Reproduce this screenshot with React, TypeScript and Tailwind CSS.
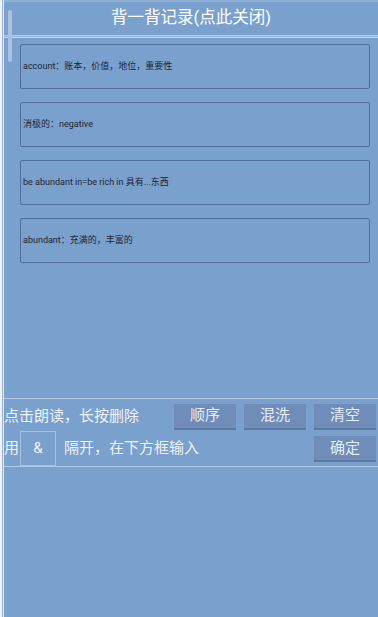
import React from "react";

const words = [
  "account：账本，价值，地位，重要性",
  "消极的：negative",
  "be abundant in=be rich in 具有...东西",
  "abundant：充满的，丰富的",
];

const font = { fontFamily: 'Roboto, "Noto Sans CJK SC", "Noto Sans", sans-serif' };

const Btn = ({ label }: { label: string }) => (
  <button className="w-[62px] h-[27px] bg-[#6f8db8] border-t border-t-[#82a0c8] border-b-2 border-b-[#5d79a0] text-[15px] text-[#e6ecf5] leading-none">
    {label}
  </button>
);

export default function App() {
  return (
    <div style={font} className="w-[378px] h-[617px] bg-[#7aa0cd] flex overflow-hidden">
      {/* left edge */}
      <div className="w-[4px] flex shrink-0">
        <div className="w-[2px] bg-[#eef2f8]" />
        <div className="w-[1px] bg-[#9fb3cc]" />
        <div className="w-[1px] bg-[#dfe7f2]" />
      </div>
      <div className="flex-1 flex flex-col relative border-t-2 border-t-[#8fb0d6]">
        {/* scrollbar */}
        <div className="absolute left-[4px] top-[8px] w-[4px] h-[52px] bg-[#a9c1de] rounded-sm" />
        <div className="h-[33px] flex items-center justify-center text-[16.5px] text-white">
          背一背记录(点此关闭)
        </div>
        <div className="h-[1px] bg-[#b8cce5]" />
        <div className="h-[1px] bg-[#90b0d6]" />
        <div className="h-[1px] bg-[#c4d5ea]" />

        <div className="flex flex-col gap-[13px] pt-[6px] pl-[16px] pr-[8px]">
          {words.map((w) => (
            <div
              key={w}
              className="h-[45px] border border-[#4f6e9b] rounded-[2px] flex items-center pl-[2px] text-[9px] text-[#1f2530]"
            >
              {w}
            </div>
          ))}
        </div>

        <div className="flex-1" />

        <div className="h-[1px] bg-[#b4c9e3]" />
        <div className="h-[30px] flex items-center pr-[2px] mt-[2px]">
          <span className="text-[15px] text-[#eef2f8] flex-1">点击朗读，长按删除</span>
          <div className="flex gap-[8px]">
            <Btn label="顺序" />
            <Btn label="混洗" />
            <Btn label="清空" />
          </div>
        </div>
        <div className="h-[35px] flex items-center pr-[2px]">
          <span className="text-[15px] text-[#eef2f8]">用</span>
          <div className="ml-[1px] w-[36px] h-[35px] border border-[#a8c0de] flex items-center justify-center text-[15px] text-[#eef2f8]">
            &amp;
          </div>
          <span className="ml-[8px] text-[15px] text-[#eef2f8] flex-1">隔开，在下方框输入</span>
          <Btn label="确定" />
        </div>
        <div className="h-[1px] bg-[#b4c9e3]" />
        <div className="h-[150px]" />
      </div>
    </div>
  );
}
